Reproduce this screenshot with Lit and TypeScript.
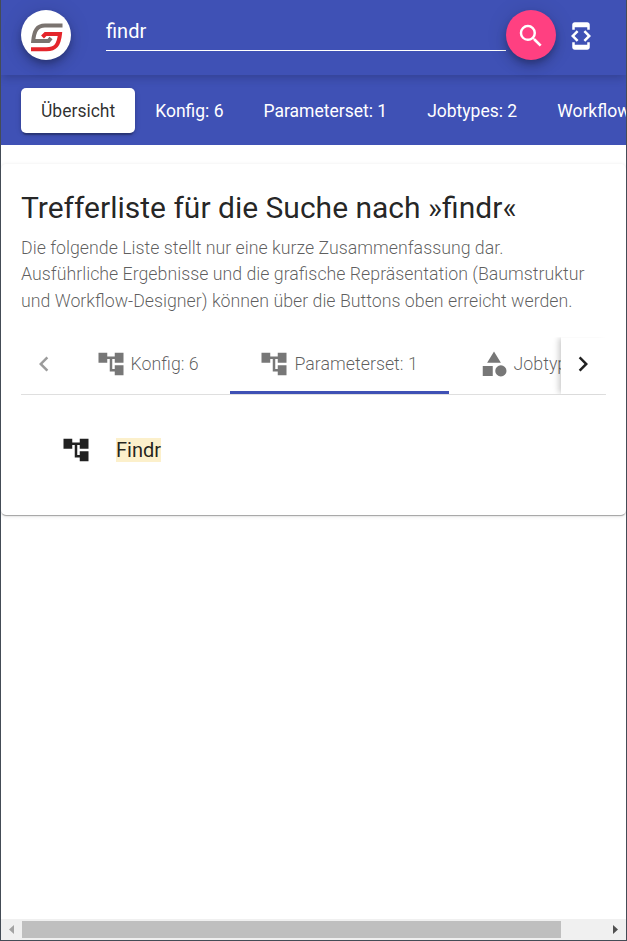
import { LitElement, html, css, svg } from "lit";
import { customElement } from "lit/decorators.js";

const icon = (d: string) =>
  html`<svg class="icon" viewBox="0 0 24 24">${svg`<path d=${d} />`}</svg>`;

const TREE = "M22 11V3h-7v3H9V3H2v8h7V8h2v10h4v3h7v-8h-7v3h-2V8h2v3z";
const SEARCH =
  "M15.5 14h-.79l-.28-.27A6.471 6.471 0 0 0 16 9.5 6.5 6.5 0 1 0 9.5 16c1.61 0 3.09-.59 4.23-1.57l.27.28v.79l5 4.99L20.49 19l-4.99-5zm-6 0C7.01 14 5 11.99 5 9.5S7.01 5 9.5 5 14 7.01 14 9.5 11.99 14 9.5 14z";
const DEVELOPER =
  "M7 5h10v2h2V3c0-1.1-.9-1.99-2-1.99L7 1c-1.1 0-2 .9-2 2v4h2V5zm8.41 11.59L20 12l-4.59-4.59L14 8.83 17.17 12 14 15.17l1.41 1.42zM10 15.17L6.83 12 10 8.83 8.59 7.41 4 12l4.59 4.59L10 15.17zM17 19H7v-2H5v4c0 1.1.9 2 2 2h10c1.1 0 2-.9 2-2v-4h-2v2z";
const CATEGORY =
  "M12 2l-5.5 9h11zM17.5 13a4.5 4.5 0 1 0 0 9a4.5 4.5 0 1 0 0-9zM3 13.5h8v8H3z";
const LEFT = "M15.41 7.41L14 6l-6 6 6 6 1.41-1.41L10.83 12z";
const RIGHT = "M8.59 16.59L10 18l6-6-6-6-1.41 1.41L13.17 12z";

@customElement("app-root")
export class AppRoot extends LitElement {
  static styles = css`
    :host {
      display: flex;
      flex-direction: column;
      box-sizing: border-box;
      width: 100%;
      height: 100vh;
      overflow: hidden;
      border: 1px solid #444c56;
      border-top: 0;
      background: #fff;
      color: rgba(0, 0, 0, 0.87);
      font-family: Roboto, sans-serif;
      font-size: 17.5px;
    }
    .icon {
      width: 30px;
      height: 30px;
      fill: currentColor;
      flex: none;
      display: block;
    }
    header {
      box-sizing: border-box;
      height: 75px;
      flex: none;
      display: flex;
      padding: 10px 20px 0;
      background: #3f51b5;
      color: #fff;
      position: relative;
      z-index: 1;
      box-shadow: 0 5px 7px -2px rgba(0, 0, 0, 0.12), 0 2px 12px rgba(0, 0, 0, 0.08);
    }
    .round {
      width: 50px;
      height: 50px;
      flex: none;
      border-radius: 50%;
      display: flex;
      align-items: center;
      justify-content: center;
      box-shadow: 0 4px 6px -1px rgba(0, 0, 0, 0.2), 0 7px 12px rgba(0, 0, 0, 0.14),
        0 1px 22px rgba(0, 0, 0, 0.12);
    }
    .logo {
      background: #fff;
    }
    .logo svg {
      width: 50px;
      height: 50px;
    }
    .go {
      background: #ff4081;
    }
    .go .icon {
      margin-top: 1px;
    }
    .field {
      box-sizing: border-box;
      margin-left: 35px;
      width: 400px;
      height: 41px;
      border-bottom: 1px solid #fff;
      font-size: 20px;
      line-height: 42px;
    }
    .dev {
      margin: 11px 0 0 10px;
    }
    nav {
      box-sizing: border-box;
      height: 70px;
      flex: none;
      display: flex;
      padding: 13px 0 0 20px;
      background: #3f51b5;
      color: #fff;
      overflow: hidden;
      white-space: nowrap;
    }
    .btn {
      height: 45px;
      line-height: 46px;
      padding: 0 20px;
      flex: none;
      border-radius: 5px;
    }
    .active {
      background: #fff;
      color: rgba(0, 0, 0, 0.82);
      box-shadow: 0 4px 1px -2px rgba(0, 0, 0, 0.2), 0 2px 3px rgba(0, 0, 0, 0.14),
        0 1px 6px rgba(0, 0, 0, 0.12);
    }
    .card {
      box-sizing: border-box;
      margin-top: 19px;
      height: 351px;
      flex: none;
      padding: 20px;
      border-radius: 5px;
      background: #fff;
      box-shadow: 0 2px 1px -1px rgba(0, 0, 0, 0.2), 0 1px 1px rgba(0, 0, 0, 0.14),
        0 1px 4px rgba(0, 0, 0, 0.12);
    }
    h1 {
      margin: 4px 0 6px;
      font-size: 30px;
      line-height: 40px;
      font-weight: 400;
      white-space: nowrap;
    }
    p {
      margin: 0;
      padding-top: 1px;
      font-size: 17.77px;
      line-height: 26.4px;
      font-weight: 300;
      color: rgba(0, 0, 0, 0.64);
      white-space: nowrap;
    }
    .tabs {
      display: flex;
      height: 57px;
      margin-top: 23px;
      border-bottom: 1px solid #dfdfdf;
    }
    .arrow {
      width: 45px;
      flex: none;
      display: flex;
      align-items: center;
      justify-content: center;
      padding-bottom: 3px;
      box-sizing: border-box;
    }
    .disabled {
      color: #9b9b9b;
    }
    .next {
      box-shadow: -3px 0 6px -1px rgba(0, 0, 0, 0.22);
      clip-path: inset(0 0 0 -14px);
      padding-right: 1px;
      background: #fff;
      position: relative;
    }
    .strip {
      flex: 1;
      min-width: 0;
      display: flex;
      overflow: hidden;
      white-space: nowrap;
      font-size: 17.8px;
      font-weight: 300;
      color: rgba(0, 0, 0, 0.64);
    }
    .tab {
      box-sizing: border-box;
      flex: none;
      display: flex;
      align-items: center;
      gap: 5px;
      padding: 0 31.2px 1px 29.6px;
      border-bottom: 3px solid transparent;
    }
    .tab .icon {
      color: #777;
    }
    .selected {
      border-color: #3f51b5;
    }
    .result {
      display: flex;
      align-items: center;
      height: 50px;
      margin-top: 30px;
      padding-left: 40px;
      font-size: 20px;
    }
    mark {
      margin-left: 25px;
      line-height: 24px;
      background: #fcf0cb;
      color: rgba(0, 0, 0, 0.87);
    }
    .scroll {
      margin-top: auto;
      height: 21px;
      flex: none;
      display: flex;
      align-items: center;
      background: #f0f0f0;
    }
    .scroll svg {
      width: 21px;
      height: 21px;
      flex: none;
    }
    .thumb {
      width: 539px;
      height: 17px;
      background: #bfbfbf;
      margin-right: auto;
    }
  `;

  render() {
    return html`
      <header>
        <div class="round logo">
          <svg viewBox="0 0 50 50" fill="none" stroke-width="4">
            <path d="M41.5 15.5H24C16 15.5 13.2 20.5 12.2 31H27.5L30 28" stroke="#7a736f" />
            <path d="M10 39.2H25.5C34.5 39.2 37.8 35 39 24H24.5L21.5 27" stroke="#e4252b" />
          </svg>
        </div>
        <div class="field">findr</div>
        <div class="round go">${icon(SEARCH)}</div>
        <div class="dev">${icon(DEVELOPER)}</div>
      </header>
      <nav>
        <div class="btn active">Übersicht</div>
        <div class="btn">Konfig: 6</div>
        <div class="btn">Parameterset: 1</div>
        <div class="btn">Jobtypes: 2</div>
        <div class="btn">Workflows: 0</div>
      </nav>
      <section class="card">
        <h1>Trefferliste für die Suche nach »findr«</h1>
        <p>
          Die folgende Liste stellt nur eine kurze Zusammenfassung dar.<br />
          Ausführliche Ergebnisse und die grafische Repräsentation (Baumstruktur<br />
          und Workflow-Designer) können über die Buttons oben erreicht werden.
        </p>
        <div class="tabs">
          <div class="arrow disabled">${icon(LEFT)}</div>
          <div class="strip">
            <div class="tab">${icon(TREE)}<span>Konfig: 6</span></div>
            <div class="tab selected">${icon(TREE)}<span>Parameterset: 1</span></div>
            <div class="tab">${icon(CATEGORY)}<span>Jobtypes: 2</span></div>
          </div>
          <div class="arrow next">${icon(RIGHT)}</div>
        </div>
        <div class="result">${icon(TREE)}<mark>Findr</mark></div>
      </section>
      <div class="scroll">
        <svg viewBox="0 0 21 21"><path d="M13 6v9L8 10.5z" fill="#a3a3a3" /></svg>
        <div class="thumb"></div>
        <svg viewBox="0 0 21 21"><path d="M8 6v9l5-4.5z" fill="#505050" /></svg>
      </div>
    `;
  }
}
